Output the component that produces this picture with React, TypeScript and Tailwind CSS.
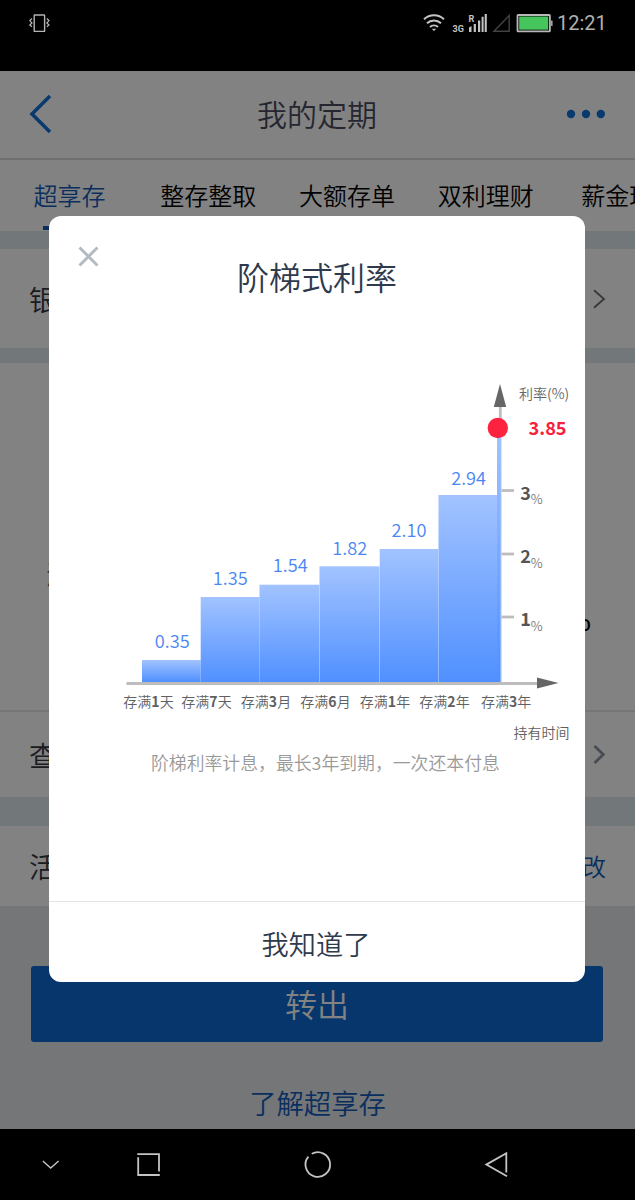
import type { ReactNode } from 'react';

const tabs = ['超享存', '整存整取', '大额存单', '双利理财', '薪金理财'];

// Chart geometry, all in the viewBox units of RateChart
const AXIS_Y = 682;

const bars = [
  { x: 142, width: 58.7, top: 660, value: '0.35', valueX: 172.3, valueY: 648 },
  { x: 200.7, width: 58.8, top: 597, value: '1.35', valueX: 230.3, valueY: 584.8 },
  { x: 259.5, width: 59.8, top: 584.7, value: '1.54', valueX: 290.3, valueY: 572.3 },
  { x: 319.5, width: 60, top: 566.3, value: '1.82', valueX: 349.7, valueY: 555.4 },
  { x: 379.7, width: 58.6, top: 549, value: '2.10', valueX: 409, valueY: 537.3 },
  { x: 438.5, width: 58.7, top: 495, value: '2.94', valueX: 468.6, valueY: 484.8 },
];

const periods = [
  { x: 148.5, count: '1', unit: '天' },
  { x: 206.5, count: '7', unit: '天' },
  { x: 266, count: '3', unit: '月' },
  { x: 325.5, count: '6', unit: '月' },
  { x: 385, count: '1', unit: '年' },
  { x: 444.5, count: '2', unit: '年' },
  { x: 506.2, count: '3', unit: '年' },
];

const ticks = [
  { y: 490.5, label: '3' },
  { y: 554, label: '2' },
  { y: 617, label: '1' },
];

const StatusBar = () => (
  <div className="flex h-[71px] items-start bg-black pt-[13px] pl-[28px]">
    <svg width="24" height="20" viewBox="0 0 24 20" fill="none" stroke="#b4b4b4">
      <rect x="6.2" y="2" width="10.4" height="16.4" rx="0.5" strokeWidth="1.4" />
      <path d="M4 5.5 1.8 7.6 4 10 1.8 12 4 13.8M18.8 5.5 21 7.6 18.8 10 21 12 18.8 13.8" strokeWidth="1.2" />
    </svg>
    <svg className="ml-[371px]" width="22" height="20" viewBox="0 0 22 20" fill="none" stroke="#c4c4c4" strokeWidth="2">
      <path d="M1 6.2a14.6 14.6 0 0 1 20 0M4 10.2a10.2 10.2 0 0 1 14 0M7 14a6 6 0 0 1 8 0" />
      <path d="M8.8 15.7h4.4L11 18z" fill="#c4c4c4" stroke="none" />
    </svg>
    <svg className="ml-[7px]" width="60" height="20" viewBox="0 0 60 20" fill="#c4c4c4">
      <text x="0.5" y="18.7" className="font-[Roboto] text-[9px] font-bold" textLength="11.5">3G</text>
      <text x="16.6" y="8.6" className="font-[Roboto] text-[9px] font-bold">R</text>
      <path d="M17 14.5 19.5 13v6H17zM21.7 11h2.2v8h-2.2zM26 7.5h2.2V19H26zM29.6 3.8h2V19h-2zM32.7 1h2.1v18h-2.1z" />
      <path d="M42 18.2 57.2 2.5v15.7z" fill="none" stroke="#424242" strokeWidth="1.4" />
    </svg>
    <svg className="ml-[4px]" width="38" height="20" viewBox="0 0 38 20">
      <rect x="1.5" y="2" width="32.4" height="16.3" rx="0.6" fill="none" stroke="#b8b8b8" strokeWidth="1.8" />
      <rect x="3.2" y="3.5" width="29" height="13.2" fill="#46c55c" />
      <path d="M35 7.5h1.6v5.5H35z" fill="#a0a0a0" />
    </svg>
    <span className="ml-[3px] font-[Roboto] text-[20px] leading-[20px] font-normal text-[#b0b0b0]">12:21</span>
  </div>
);

const Chevron = ({ bold }: { bold?: boolean }) => (
  <svg className="ml-auto" width="14" height="22" viewBox="0 0 14 22" fill="none">
    {bold ? (
      <path d="m2.5 2 8.8 8.5-8.8 8.5" stroke="#8c94a4" strokeWidth="2.8" />
    ) : (
      <path d="m2 2.3 10 8.7-10 8.8" stroke="#6e6e6e" strokeWidth="1.8" />
    )}
  </svg>
);

const Row = ({ className, children }: { className: string; children: ReactNode }) => (
  <div className={`flex shrink-0 items-center bg-white pr-[29px] pl-[29px] text-[28px] text-[#34383f] ${className}`}>
    {children}
  </div>
);

const RateChart = () => (
  <svg className="mt-[36px] ml-[60px] shrink-0" width="470" height="370" viewBox="109 376 470 370">
    <defs>
      <linearGradient id="bar" x1="0" y1="0" x2="0" y2="1">
        <stop offset="0" stopColor="#a2c3ff" />
        <stop offset="1" stopColor="#5090ff" />
      </linearGradient>
    </defs>

    {/* Vertical axis */}
    <path d="M498.9 405h2.8v24h-2.8z" fill="#bdbdbd" />
    <path d="m500 384 6.2 23h-12.4z" fill="#666" />

    {bars.map((bar) => (
      <g key={bar.value}>
        <rect x={bar.x} y={bar.top} width={bar.width} height={AXIS_Y - bar.top} fill="url(#bar)" />
        <text x={bar.valueX} y={bar.valueY} textAnchor="middle" className="fill-[#4a86f4] text-[18.2px]">
          {bar.value}
        </text>
      </g>
    ))}
    <rect x="497" y="430" width="4.2" height={AXIS_Y - 430} fill="url(#bar)" />
    <rect x="500.3" y="430" width="1" height={AXIS_Y - 430} fill="#a2c3ff" />

    {/* Horizontal axis */}
    <path d="M126.5 682h412v3h-412z" fill="#bdbdbd" />
    <path d="m558.5 683-21.5 5.5v-11z" fill="#666" />

    <circle cx="497.8" cy="428" r="10.2" fill="#fd2340" />
    <text x="528.5" y="435.3" className="fill-[#f6213c] text-[18.2px] font-bold">3.85</text>
    <text x="519" y="399.4" className="fill-[#666] text-[14px]">利率(%)</text>

    {ticks.map((tick) => (
      <g key={tick.label}>
        <path d={`M501.5 ${tick.y}h12.5`} stroke="#bdbdbd" strokeWidth="2.8" />
        <text x="520.2" y={tick.y + 9.4} className="fill-[#555] text-[18px] font-bold">
          {tick.label}
          <tspan dy="4.5" className="fill-[#777] text-[13px] font-[350]">%</tspan>
        </text>
      </g>
    ))}

    {periods.map((period) => (
      <text key={period.x} x={period.x} y="707" textAnchor="middle" className="fill-[#606060] text-[14px]">
        存满<tspan className="font-bold">{period.count}</tspan>{period.unit}
      </text>
    ))}
    <text x="513.5" y="737.5" className="fill-[#606060] text-[14px]">持有时间</text>
  </svg>
);

const RateModal = () => (
  <div className="absolute inset-0 bg-black/49 pt-[145px] pl-[49px]">
    <div className="relative flex h-[766px] w-[536px] flex-col rounded-xl bg-white">
      <button type="button" className="absolute top-[30px] left-[29px]">
        <svg width="21" height="21" viewBox="0 0 21 21" stroke="#b3bac2" strokeWidth="2.9">
          <path d="m1.5 1.5 18 18M19.5 1.5l-18 18" />
        </svg>
      </button>
      <h2 className="flex h-[124px] shrink-0 items-center justify-center pb-[4px] text-[32px] text-[#2f3a4c]">阶梯式利率</h2>
      <RateChart />
      <p className="ml-[102px] flex h-8 items-center text-[17.85px] whitespace-nowrap text-[#999]">
        阶梯利率计息，最长3年到期，一次还本付息
      </p>
      <button type="button" className="mt-auto h-[81px] border-t border-[#e4e4e4] pt-[3px] pr-[2px] text-[27.2px] text-[#2f3a4c]">
        我知道了
      </button>
    </div>
  </div>
);

const NavBar = () => (
  <div className="flex h-[71px] items-center bg-black">
    <svg width="635" height="71" viewBox="0 0 635 71" fill="none" stroke="#c4c4c4" strokeWidth="1.8">
      <path d="m42.8 32 7.9 7 7.9-7" strokeWidth="1.4" />
      <path d="M137.3 25.2H159V42.5M138.2 28.3V46h21.6" />
      <path d="M311.8 24.8a12.3 12.3 0 1 1-3.4 2.8" />
      <path d="M506.3 43.5V24.2L486.3 35.6 507 47.3" />
    </svg>
  </div>
);

export default function App() {
  return (
    <div className="h-[1200px] w-[635px] overflow-hidden bg-black font-['Noto_Sans_CJK_SC',sans-serif] font-[350]">
      <StatusBar />
      <div className="relative flex h-[1058px] flex-col overflow-hidden bg-[#e0eaf0]">
        <header className="flex h-[89px] shrink-0 items-center justify-between border-b-2 border-[#dcdcdc] bg-white pr-[29px] pb-px pl-[28px]">
          <svg width="40" height="40" viewBox="0 0 40 40" fill="none" stroke="#1272d6" strokeWidth="3.6">
            <path d="M22 2 4 20 22 38" />
          </svg>
          <h1 className="pb-px text-[30px] text-[#4a4c5c]">我的定期</h1>
          <svg width="40" height="10" viewBox="0 0 40 10" fill="#1272d6">
            <circle cx="5" cy="5" r="4.2" />
            <circle cx="20" cy="5" r="4.2" />
            <circle cx="34.8" cy="5" r="4.2" />
          </svg>
        </header>

        <nav className="flex h-[71px] shrink-0 bg-white text-[24px]">
          {tabs.map((tab, i) => (
            <div
              key={tab}
              className={`flex shrink-0 flex-col items-center justify-between pt-[17px] pb-px ${i === 0 ? 'text-[#145cb8]' : 'text-black'} ${i === 4 ? 'w-[148px]' : 'w-[138.8px]'}`}
            >
              <span className="leading-[35px]">{tab}</span>
              {i === 0 && <span className="h-1 w-[53px] bg-[#145cb8]" />}
            </div>
          ))}
        </nav>

        <Row className="mt-[18px] h-[99px]">
          银行卡
          <Chevron />
        </Row>
        <Row className="mt-[15px] h-[347px]">
          <div className="flex flex-1 items-center justify-between pt-[88px] pr-[15px] pl-[17px]">
            <span className="-mt-[14px] text-[26px] text-[#555]">满期利率</span>
            <span className="mt-[77px] text-[26px] font-medium text-black">3.85%</span>
          </div>
        </Row>
        <Row className="h-[87px] border-t-2 border-[#e8e8e8]">
          查看明细
          <Chevron bold />
        </Row>
        <Row className="mt-[29px] h-[80px]">
          活期账户
          <span className="ml-auto text-[24px] text-[#145cb8]">修改</span>
        </Row>

        <div className="flex flex-1 flex-col bg-[#e3e8ec] px-[31px] pt-[60px]">
          <button type="button" className="h-[76px] w-[572px] shrink-0 rounded-[3px] bg-[#0c6ad2] pb-[2px] text-[32px] text-white">
            转出
          </button>
          <a className="mt-[40px] text-center text-[27.3px] leading-[40px] text-[#145cb8]">了解超享存</a>
        </div>

        <RateModal />
      </div>
      <NavBar />
    </div>
  );
}
